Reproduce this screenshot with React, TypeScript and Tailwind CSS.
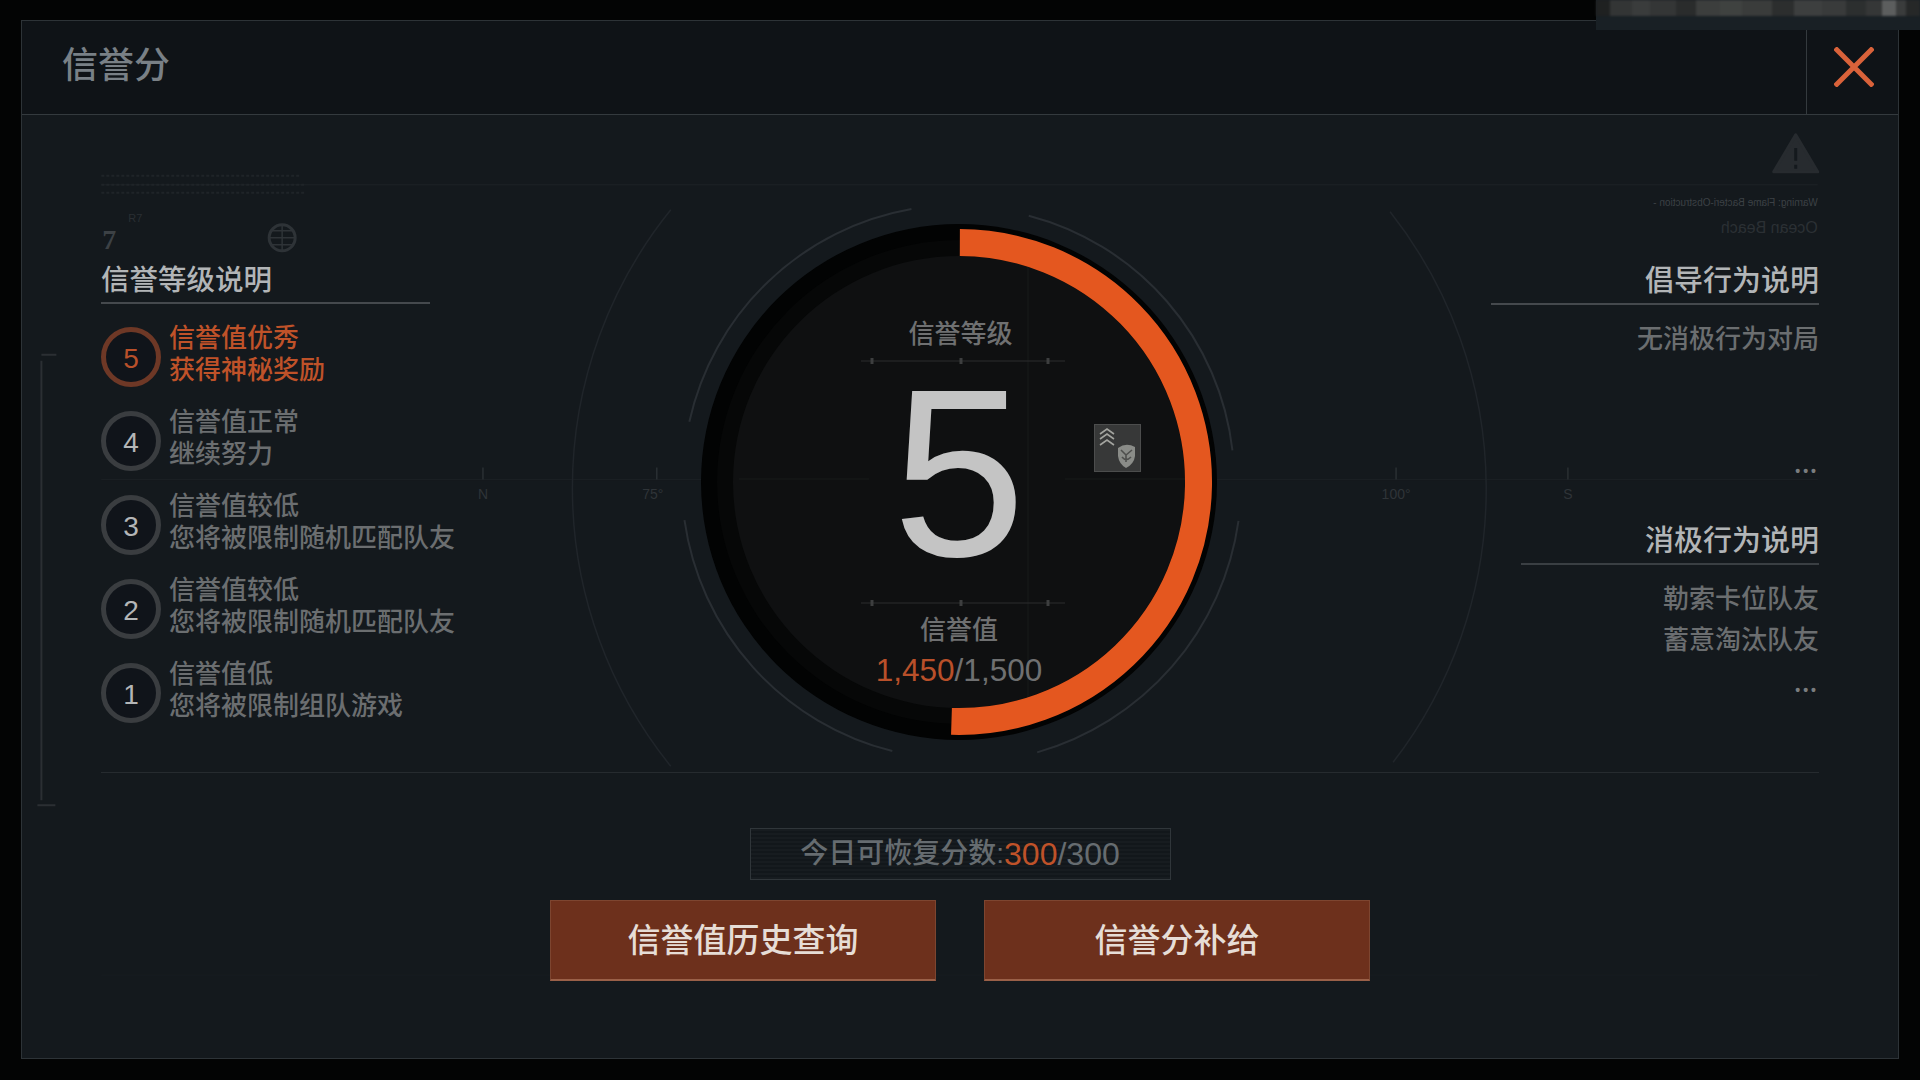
const levels = [
  { n: 5, title: '信誉值优秀', desc: '获得神秘奖励', active: true },
  { n: 4, title: '信誉值正常', desc: '继续努力' },
  { n: 3, title: '信誉值较低', desc: '您将被限制随机匹配队友' },
  { n: 2, title: '信誉值较低', desc: '您将被限制随机匹配队友' },
  { n: 1, title: '信誉值低', desc: '您将被限制组队游戏' },
];

const mosaic = [
  'w-[14px] bg-[#1f2121]', 'w-[22px] bg-[#333535]', 'w-[18px] bg-[#3a3c3c]', 'w-[26px] bg-[#343636]',
  'w-[20px] bg-[#2a2c2c]', 'w-[24px] bg-[#3c3e3d]', 'w-[22px] bg-[#3f4240]', 'w-[30px] bg-[#3a3c3b]',
  'w-[22px] bg-[#2c2e2e]', 'w-[28px] bg-[#3d3f3f]', 'w-[24px] bg-[#393b3b]', 'w-[20px] bg-[#2c2f2f]',
  'w-[16px] bg-[#353737]', 'w-[14px] bg-[#5c5e5e]', 'w-[10px] bg-[#3a3c3c]', 'flex-1 bg-[#262828]',
];

function arcPath(cx: number, cy: number, r: number, from: number, to: number) {
  const pt = (deg: number) => {
    const a = ((deg - 90) * Math.PI) / 180;
    return `${(cx + r * Math.cos(a)).toFixed(2)} ${(cy + r * Math.sin(a)).toFixed(2)}`;
  };
  const large = to - from > 180 ? 1 : 0;
  return `M ${pt(from)} A ${r} ${r} 0 ${large} 1 ${pt(to)}`;
}

// faint HUD left over behind the dialog
function HudBackdrop() {
  return (
    <svg className="absolute inset-0 w-full h-full" viewBox="21 20 1877 1038" fill="none">
      <path d="M100 184H1818" stroke="#1e2327" />
      <path d="M100 479H860M1060 479H1818" stroke="#1b2024" />
      <path d="M100 975H1818" stroke="#181d21" />
      <path d="M100 175H300M100 184H304M100 192H304" stroke="#1f2428" strokeWidth="2" strokeDasharray="3 2" />
      <path d="M40 360V800" stroke="#2b2f33" strokeWidth="2" />
      <path d="M40 354H55M36 805H54" stroke="#2b2f33" strokeWidth="2" />
      <path d="M670 209A443 443 0 0 0 670 766" stroke="#20252a" strokeWidth="1.5" />
      <path d="M1390 211A448 448 0 0 1 1393 762" stroke="#20252a" strokeWidth="1.5" />
      <path d={arcPath(959, 481, 277, -77.5, -10)} stroke="#292e33" strokeWidth="2" />
      <path d={arcPath(959, 481, 275, 14.6, 83.5)} stroke="#292e33" strokeWidth="2" />
      <path d={arcPath(959, 481, 282, 98, 164)} stroke="#292e33" strokeWidth="2" />
      <path d={arcPath(959, 481, 278, 194, 262)} stroke="#292e33" strokeWidth="2" />
      <path d="M482 467V479M656 467V479M1396 467V479M1568 467V479" stroke="#2a2f33" strokeWidth="1.5" />
      <g fill="#2f3438" fontFamily="'Liberation Sans', sans-serif" fontSize="14" textAnchor="middle">
        <text x="482" y="498">N</text>
        <text x="652" y="498">75°</text>
        <text x="1396" y="498">100°</text>
        <text x="1568" y="498">S</text>
      </g>
      <text x="101" y="248" fill="#3c4145" fontFamily="'Liberation Serif', serif" fontSize="28" fontWeight="700">7</text>
      <text x="127" y="221" fill="#2a2f33" fontFamily="'Liberation Sans', sans-serif" fontSize="11">R7</text>
      <g stroke="#2e3337" strokeWidth="1.5">
        <circle cx="281" cy="237" r="13" strokeWidth="3" />
        <path d="M281 224V250M268 237H294M270 230H292M270 244H292" />
      </g>
      <path d="M1796 134L1818 171H1774Z" fill="#272b2f" stroke="#272b2f" strokeWidth="3" strokeLinejoin="round" />
      <path d="M1796 147V160M1796 164V168" stroke="#14191d" strokeWidth="3" />
      <g fontFamily="'Liberation Sans', sans-serif">
        <text transform="translate(1818 205) scale(-1 1)" fontSize="10" fill="#3c4145">Warning: Flame Bacteri-Obstruction -</text>
        <text transform="translate(1818 232) scale(-1 1)" fontSize="16" fill="#2b3034">Ocean Beach</text>
      </g>
    </svg>
  );
}

function MedalIcon() {
  return (
    <svg viewBox="0 0 47 48" className="absolute left-[415px] top-[223px] w-[47px] h-[48px]" fill="none">
      <rect x="0.5" y="0.5" width="46" height="47" fill="#373838" stroke="#4c4d4d" />
      <g stroke="#a3a49f" strokeWidth="1.6">
        <path d="M6 10L13 5L20 10" />
        <path d="M6 15L13 10L20 15" />
        <path d="M6 21L13 16L20 21" />
      </g>
      <path d="M24 24Q32 18 41 23V32Q40 40 32 44Q25 40 24 32Z" fill="#8a8c88" />
      <path d="M27 26L32 31L38 26M32 31V38M28 33Q32 38 37 33" stroke="#4e4f4d" strokeWidth="1.6" />
    </svg>
  );
}

function TickLine({ className }: { className: string }) {
  return (
    <svg viewBox="0 0 204 8" className={className} fill="none">
      <path d="M0 4H204" stroke="#2c2d2e" />
      <path d="M11 1V7M100 1V7M187 1V7" stroke="#3d3e3f" strokeWidth="3" />
    </svg>
  );
}

function Dial() {
  return (
    <div className="relative w-[560px] h-[560px] mt-[86px]">
      <svg viewBox="0 0 560 560" className="absolute inset-0 w-full h-full" fill="none">
        <circle cx="280" cy="281" r="258" fill="#020303" />
        <circle cx="280" cy="281" r="242" fill="#060707" />
        <circle cx="280" cy="281" r="226" fill="#0f1011" />
        <path d="M349 56V506M60 278H190M386 278H510" stroke="#191a1b" />
        <path d={arcPath(280, 281, 239.5, 0.2, 181.8)} stroke="#e4571f" strokeWidth="27" />
      </svg>
      <div className="absolute left-[3px] right-0 top-[115px] text-center text-[26px] leading-[36px] font-medium text-[#6f7071]">信誉等级</div>
      <TickLine className="absolute left-[182px] top-[156px] w-[204px] h-[8px]" />
      <div className="absolute left-0 right-0 top-[177px] text-center text-[240px] leading-[190px] text-[#c4c4c4]">5</div>
      <MedalIcon />
      <TickLine className="absolute left-[182px] top-[398px] w-[204px] h-[8px]" />
      <div className="absolute left-0 right-0 top-[411px] text-center text-[26px] leading-[36px] font-medium text-[#6f7071]">信誉值</div>
      <div className="absolute left-0 right-0 top-[449px] text-center text-[31.5px] leading-[40px] text-[#6f7071]">
        <span className="text-[#b9502a]">1,450</span>/1,500
      </div>
    </div>
  );
}

function LevelRow({ n, title, desc, active }: { n: number; title: string; desc: string; active?: boolean }) {
  return (
    <div className="flex items-center gap-[8px] h-[84px]">
      <div
        className={`w-[60px] h-[60px] shrink-0 rounded-full border-[5px] bg-[#10141a] flex items-center justify-center text-[28px] pt-[3px] ${
          active ? 'border-[#6e3826] text-[#b9502a]' : 'border-[#3a3d40] text-[#b4b6b7]'
        }`}
      >
        {n}
      </div>
      <div className={`-mt-[6px] text-[26px] leading-[32px] font-medium whitespace-nowrap ${active ? 'text-[#bf5229]' : 'text-[#6b6e70]'}`}>
        <div>{title}</div>
        <div>{desc}</div>
      </div>
    </div>
  );
}

export default function App() {
  return (
    <div className="relative w-[1920px] h-[1080px] overflow-hidden bg-[#030404] pt-[20px] pl-[21px] font-['Liberation_Sans','Noto_Sans_CJK_SC',sans-serif]">
      <div className="relative w-[1878px] h-[1039px] bg-[#14191d] border border-[#2d3337]">
        <HudBackdrop />
        <div className="relative flex flex-col h-full">
          <header className="flex h-[94px] shrink-0 bg-[#0f1317] border-b border-[#343a3e]">
            <h1 className="flex-1 pl-[40px] pt-[22px] text-[36px] leading-[46px] font-medium text-[#798086]">信誉分</h1>
            <button className="w-[92px] border-l border-[#343a3e] flex items-center justify-center">
              <svg viewBox="0 0 40 40" className="w-[40px] h-[40px] mb-[2px] ml-[2px]" fill="none">
                <path d="M1 1L39 39M39 1L1 39" stroke="#d9623a" strokeWidth="5" />
              </svg>
            </button>
          </header>

          <div className="mx-[79px] h-[658px] shrink-0 grid grid-cols-[578px_560px_1fr] border-b border-[#262b2f]">
            <section className="pt-[145px]">
              <h2 className="w-[329px] h-[44px] text-[28.5px] leading-[40px] font-medium text-[#b2b5b7] border-b-2 border-[#45494d]">信誉等级说明</h2>
              <div className="mt-[11px]">
                {levels.map((l) => (
                  <LevelRow key={l.n} {...l} />
                ))}
              </div>
            </section>

            <Dial />

            <section className="flex flex-col items-end text-right">
              <h2 className="mt-[146px] w-[328px] h-[44px] text-[29px] leading-[40px] font-medium text-[#b2b5b7] border-b-2 border-[#45494d]">倡导行为说明</h2>
              <p className="mt-[16px] text-[26px] leading-[36px] font-medium text-[#6b6e70]">无消极行为对局</p>
              <div className="mt-[104px] text-[14px] leading-[20px] font-bold tracking-[3px] text-[#7a7d7f]">•••</div>
              <h2 className="mt-[40px] w-[298px] h-[44px] text-[29px] leading-[40px] font-medium text-[#b2b5b7] border-b-2 border-[#3a3f43]">消极行为说明</h2>
              <div className="mt-[14px] text-[26px] leading-[41px] font-medium text-[#6b6e70]">
                <p>勒索卡位队友</p>
                <p>蓄意淘汰队友</p>
              </div>
              <div className="mt-[19px] text-[14px] leading-[20px] font-bold tracking-[3px] text-[#7a7d7f]">•••</div>
            </section>
          </div>

          <div className="flex flex-col items-center">
            <div className="mt-[55px] w-[421px] h-[52px] border border-[#30363a] bg-[repeating-linear-gradient(0deg,#171c20_0px,#171c20_2px,#12171b_2px,#12171b_4px)] flex items-center justify-center text-[28px] font-medium text-[#666c70] whitespace-nowrap">
              今日可恢复分数:
              <span className="text-[32px] font-normal">
                <span className="text-[#bf5229]">300</span>/300
              </span>
            </div>
            <div className="mt-[20px] flex gap-[48px]">
              <button className="w-[386px] h-[81px] pt-[2px] bg-[#6d301c] border border-[#7d4530] border-b-2 border-b-[#9a6048] text-[33px] font-medium text-[#e6ddd6]">信誉值历史查询</button>
              <button className="w-[386px] h-[81px] pt-[2px] bg-[#6d301c] border border-[#7d4530] border-b-2 border-b-[#9a6048] text-[33px] font-medium text-[#e6ddd6]">信誉分补给</button>
            </div>
          </div>
        </div>
      </div>

      {/* blurred strip in the top right corner */}
      <div className="absolute top-0 left-[1596px] right-0 h-[30px] bg-[#192025]">
        <div className="flex h-[16px] blur-[1px]">
          {mosaic.map((c, i) => (
            <div key={i} className={c} />
          ))}
        </div>
      </div>
    </div>
  );
}
